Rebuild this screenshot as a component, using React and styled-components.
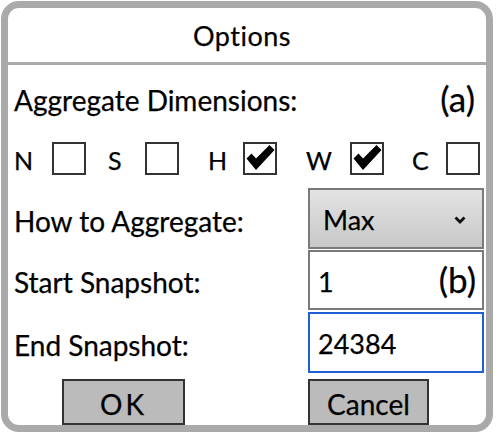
import React from 'react';
import styled, { createGlobalStyle } from 'styled-components';

const GlobalStyle = createGlobalStyle`
  html, body {
    margin: 0;
    padding: 0;
    background: #fff;
  }
  body {
    font-family: Lato, "Open Sans", sans-serif;
    color: #000;
    -webkit-text-stroke: 0.25px #000;
  }
`;

const Frame = styled.div`
  box-sizing: border-box;
  margin: 1px 0 0 1px;
  width: 492px;
  height: 431px;
  border: 7px solid #aaa;
  border-radius: 18px;
  display: flex;
  flex-direction: column;
  overflow: hidden;
`;

const Header = styled.div`
  box-sizing: border-box;
  height: 57px;
  border-bottom: 3px solid #aaa;
  display: flex;
  align-items: center;
  justify-content: center;
  padding-right: 10px;
  font-size: 27px;
  letter-spacing: 0.5px;
`;

const Body = styled.div`
  display: flex;
  flex-direction: column;
  padding: 0 2px 0 6px;
`;

const AggRow = styled.div`
  height: 70px;
  display: flex;
  align-items: center;
  justify-content: space-between;
  font-size: 28px;
`;

const Tag = styled.span`
  font-size: 35px;
  margin-right: 9px;
  margin-top: -4px;
`;

const CheckRow = styled.div`
  margin-top: 6px;
  height: 34px;
  display: grid;
  grid-template-columns: 38px 56px 37px 63px 35px 63px 44px 62px 34px 34px;
  align-items: center;
  font-size: 25px;
`;

const Letter = styled.span`
  padding-top: 4px;
`;

const Box = styled.div`
  box-sizing: border-box;
  width: 34px;
  height: 33px;
  border: 2px solid #333;
  background: #fff;
  display: flex;
  align-items: center;
  justify-content: center;
`;

const FieldRow = styled.div`
  display: grid;
  grid-template-columns: 1fr 176px;
  align-items: center;
  margin-top: ${(p) => p.$mt}px;
  font-size: 28px;
`;

const Label = styled.span`
  padding-top: 4px;
`;

const Select = styled.div`
  box-sizing: border-box;
  height: 61px;
  border: 2px solid #7a7a7a;
  background: linear-gradient(#e3e3e3, #c8c8c8);
  display: flex;
  align-items: center;
  justify-content: space-between;
  padding: 2px 16px 0 13px;
  font-size: 27px;
`;

const Field = styled.div`
  box-sizing: border-box;
  height: ${(p) => p.$h}px;
  border: 2px solid ${(p) => (p.$focus ? '#1f5fd3' : '#7a7a7a')};
  background: #fff;
  display: flex;
  align-items: center;
  justify-content: space-between;
  padding: 2px 6px 0 8px;
  font-size: 27px;
`;

const FieldTag = styled.span`
  font-size: 35px;
  margin-top: -4px;
`;

const ButtonRow = styled.div`
  display: grid;
  grid-template-columns: 1fr 176px;
  margin-top: 6px;
  height: 46px;
`;

const Button = styled.button`
  box-sizing: border-box;
  width: ${(p) => p.$w}px;
  height: 46px;
  margin-left: ${(p) => p.$ml || 0}px;
  border: 2px solid #333;
  border-radius: 0;
  background: #bbb;
  font-family: Lato, "Open Sans", sans-serif;
  font-size: 28px;
  color: #000;
  padding: 3px 0 0;
  letter-spacing: ${(p) => p.$ls || 0}px;
`;

function Check() {
  return (
    <svg width="30" height="29" viewBox="0 0 30 29">
      <path d="M1.5 14.5 L6.5 9.5 L11 14.5 L24.5 1 L29.5 6 L11 26 Z" fill="#000" />
    </svg>
  );
}

function Chevron() {
  return (
    <svg width="12" height="8" viewBox="0 0 12 8">
      <polyline points="1.5,1.5 6,6 10.5,1.5" fill="none" stroke="#111" strokeWidth="2.8" />
    </svg>
  );
}

const dims = [
  { key: 'N', checked: false },
  { key: 'S', checked: false },
  { key: 'H', checked: true },
  { key: 'W', checked: true },
  { key: 'C', checked: false },
];

export default function App() {
  return (
    <>
      <GlobalStyle />
      <Frame>
        <Header>Options</Header>
        <Body>
          <AggRow>
            <span>Aggregate Dimensions:</span>
            <Tag>(a)</Tag>
          </AggRow>
          <CheckRow>
            {dims.map((d) => (
              <React.Fragment key={d.key}>
                <Letter>{d.key}</Letter>
                <Box>{d.checked && <Check />}</Box>
              </React.Fragment>
            ))}
          </CheckRow>
          <FieldRow $mt={13}>
            <Label>How to Aggregate:</Label>
            <Select>
              <span>Max</span>
              <Chevron />
            </Select>
          </FieldRow>
          <FieldRow $mt={1}>
            <Label>Start Snapshot:</Label>
            <Field $h={60}>
              <span>1</span>
              <FieldTag>(b)</FieldTag>
            </Field>
          </FieldRow>
          <FieldRow $mt={2}>
            <Label>End Snapshot:</Label>
            <Field $h={61} $focus>
              <span>24384</span>
            </Field>
          </FieldRow>
          <ButtonRow>
            <div>
              <Button $w={123} $ml={48} $ls={3}>OK</Button>
            </div>
            <div>
              <Button $w={121}>Cancel</Button>
            </div>
          </ButtonRow>
        </Body>
      </Frame>
    </>
  );
}
